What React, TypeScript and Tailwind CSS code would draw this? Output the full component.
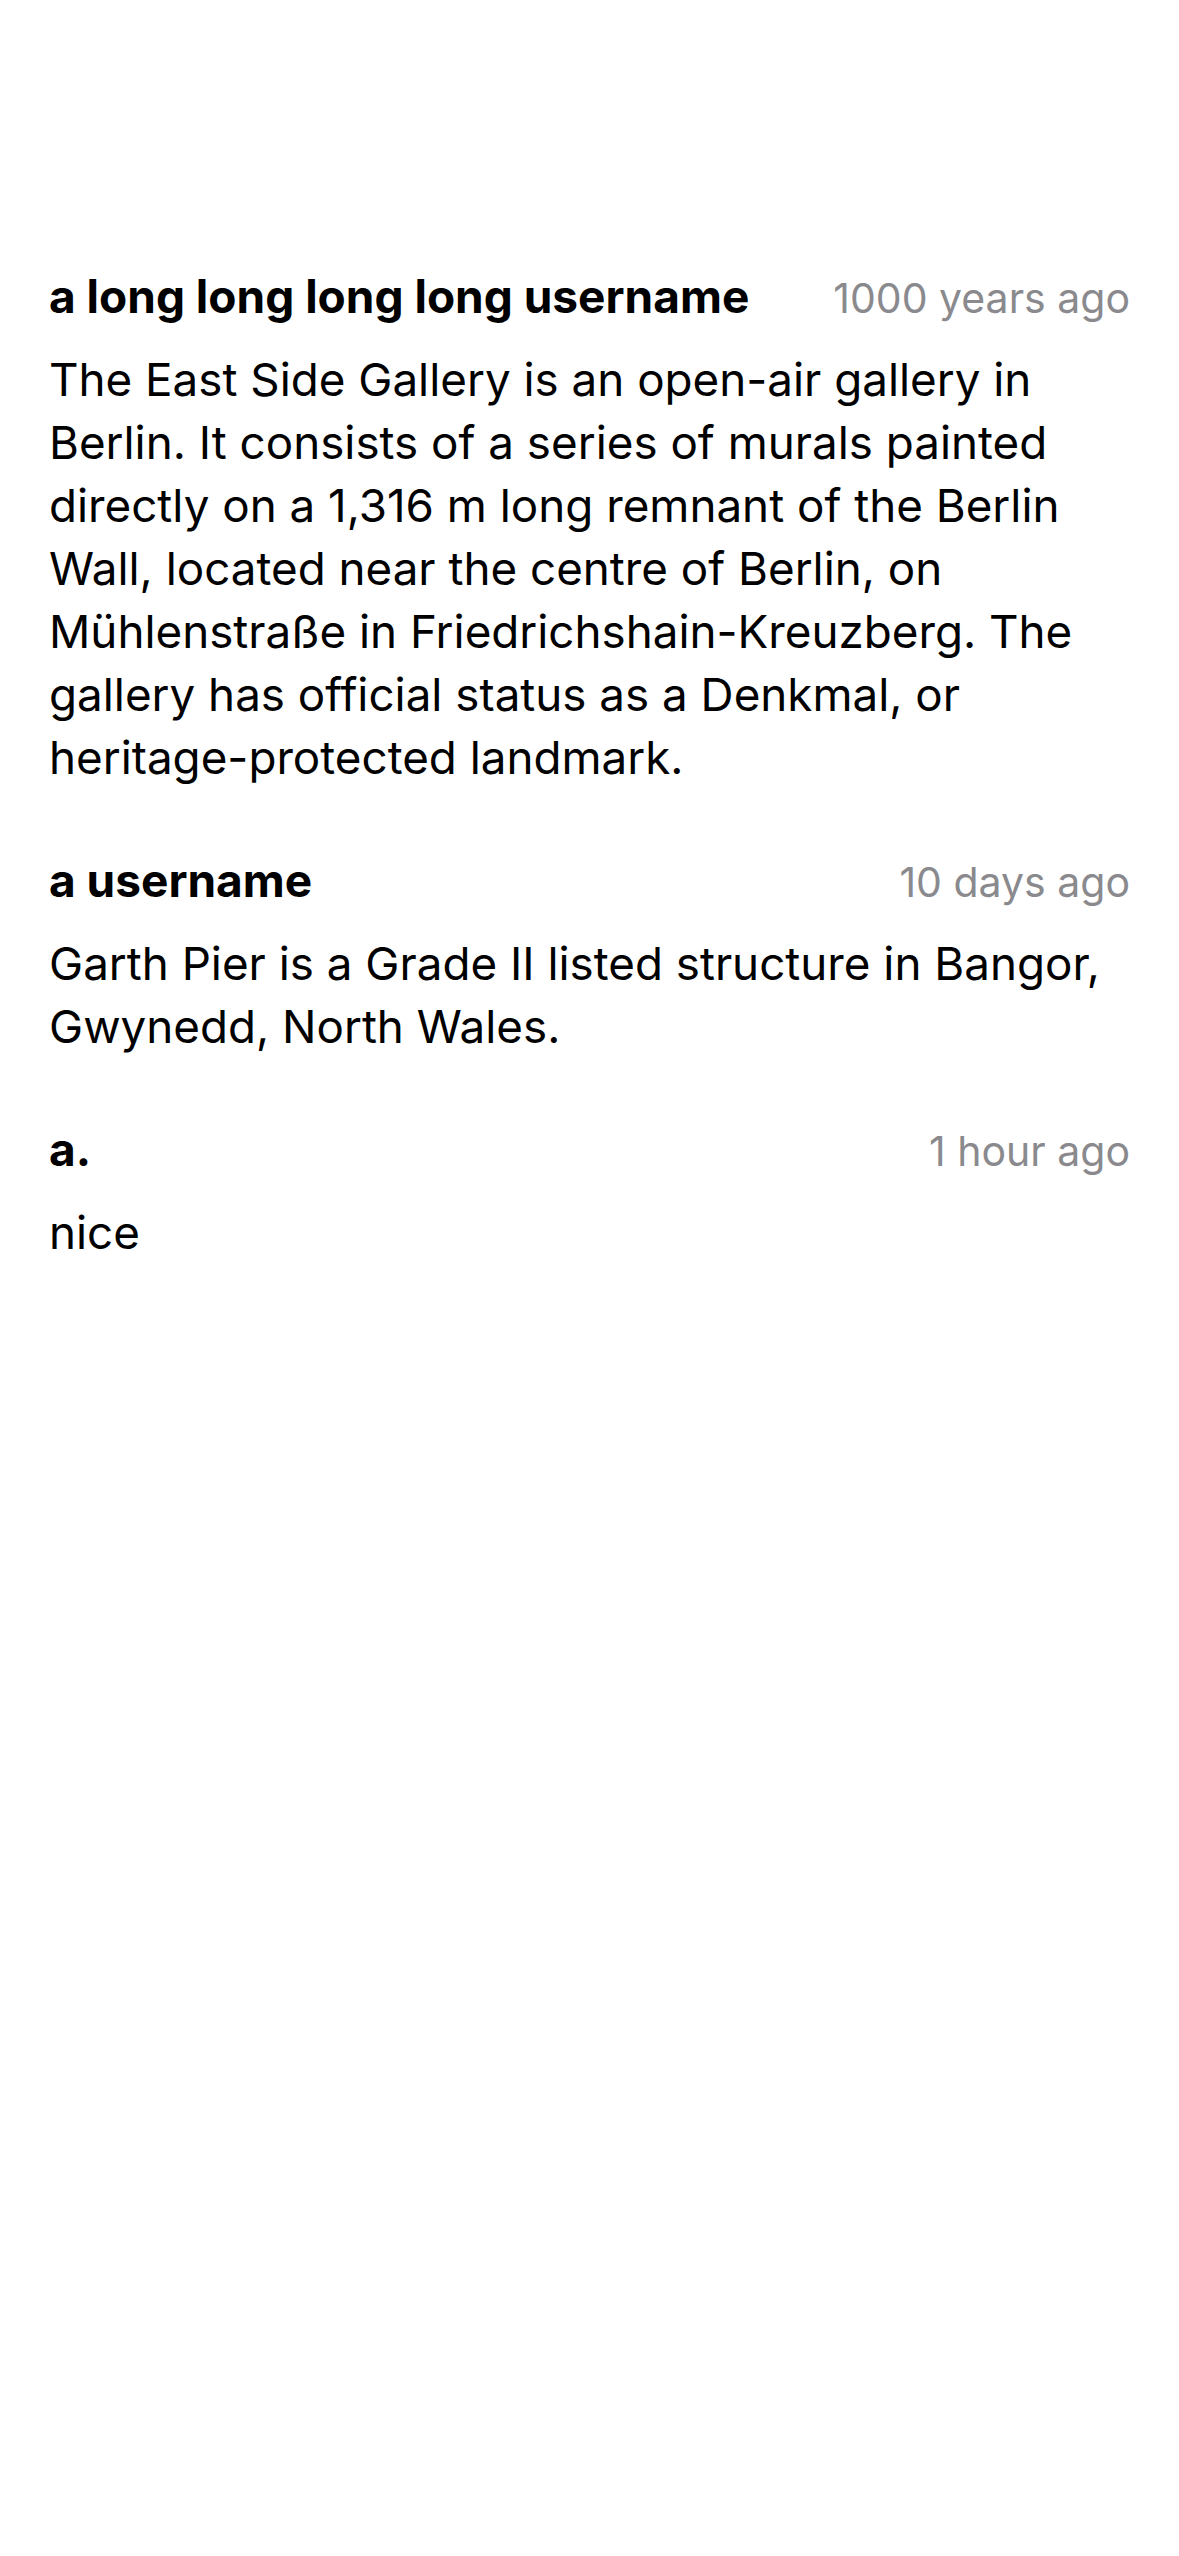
const comments = [
  {
    id: 1,
    user: 'a long long long long username',
    time: '1000 years ago',
    text: 'The East Side Gallery is an open-air gallery in Berlin. It consists of a series of murals painted directly on a 1,316 m long remnant of the Berlin Wall, located near the centre of Berlin, on Mühlenstraße in Friedrichshain-Kreuzberg. The gallery has official status as a Denkmal, or heritage-protected landmark.',
  },
  {
    id: 2,
    user: 'a username',
    time: '10 days ago',
    text: 'Garth Pier is a Grade II listed structure in Bangor, Gwynedd, North Wales.',
  },
  { id: 3, user: 'a.', time: '1 hour ago', text: 'nice' },
];

export default function App() {
  return (
    <div className="min-h-screen bg-white text-black font-['Inter','Liberation_Sans',sans-serif]">
      <div className="flex flex-col gap-[64px] px-[49px] pt-[269px]">
        {comments.map((c) => (
          <div key={c.id} className="flex flex-col gap-[23px]">
            <div className="flex items-baseline justify-between gap-[40px]">
              <span className="text-[46px] leading-[54px] font-bold truncate">{c.user}</span>
              <span className="text-[41px] leading-[54px] text-[#8a8a8e] shrink-0">{c.time}</span>
            </div>
            <p className="text-[45.75px] leading-[63px]">{c.text}</p>
          </div>
        ))}
      </div>
    </div>
  );
}
